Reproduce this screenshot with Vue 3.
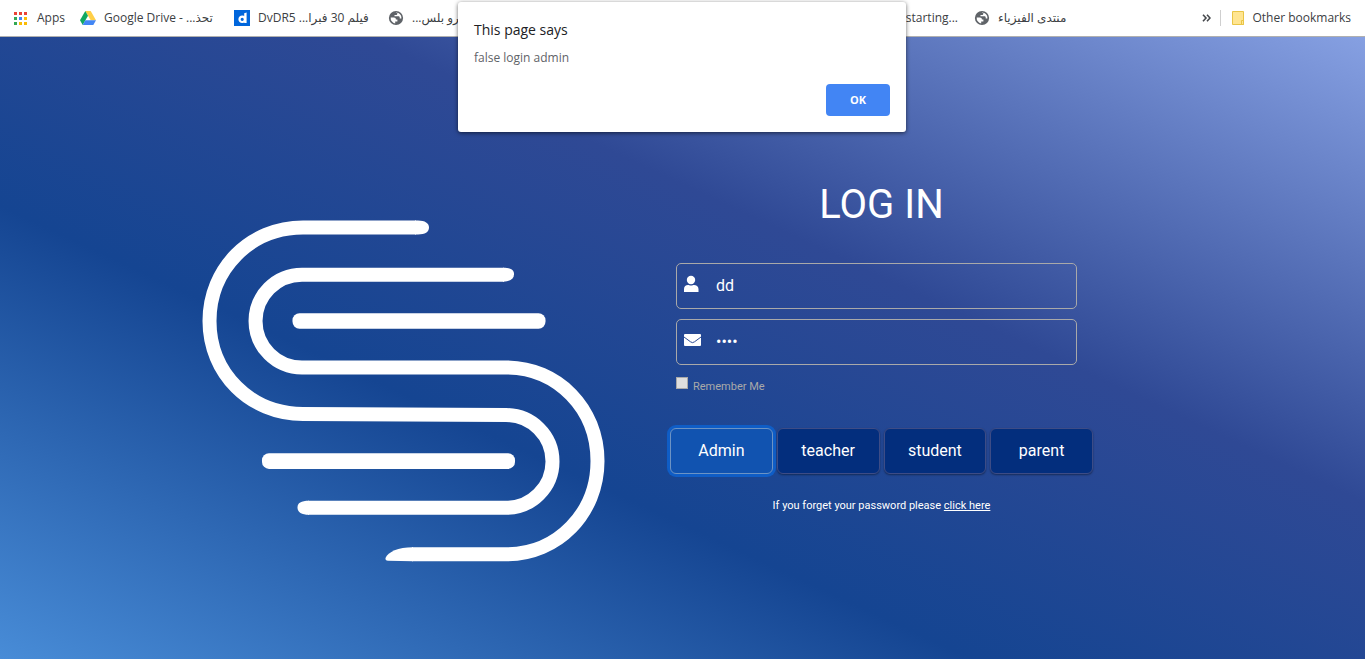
<script setup>
import { ref } from 'vue'

const username = ref('dd')
const password = ref('pass')
const remember = ref(false)
const dialogOpen = ref(true)
const roles = ['Admin', 'teacher', 'student', 'parent']
const activeRole = ref('Admin')
const appColors = [
  '#ea4335', '#ea4335', '#ea4335',
  '#34a853', '#4285f4', '#fbbc05',
  '#34a853', '#fbbc05', '#fbbc05',
]
</script>

<template>
  <div class="page">
    <nav class="bookmarks" aria-label="Bookmarks">
      <a class="bookmark apps" href="#">
        <svg class="apps-icon" viewBox="0 0 13 13" aria-hidden="true">
          <rect
            v-for="(c, i) in appColors"
            :key="i"
            :x="(i % 3) * 5"
            :y="Math.floor(i / 3) * 5"
            width="3"
            height="3"
            :fill="c"
          />
        </svg>
        <span>Apps</span>
      </a>
      <a class="bookmark chip" href="#">
        <svg class="icon" viewBox="0 0 16 16" aria-hidden="true">
          <path d="M5.3 1h5.4L16 10.2h-5.3z" fill="#ffcf48" />
          <path d="M5.3 1 0 10.3 2.7 15 8 5.7z" fill="#11a861" />
          <path d="M5.4 10.2H16L13.3 15H2.7z" fill="#4286f5" />
        </svg>
        <span>Google Drive - <bdi dir="rtl">تحذ...</bdi></span>
      </a>
      <a class="bookmark chip" href="#">
        <svg class="icon" viewBox="0 0 16 16" aria-hidden="true">
          <path d="M0 0h16v16H0z" fill="#0066dc" />
          <circle cx="8.2" cy="9.3" r="2.7" fill="none" stroke="#fff" stroke-width="2.2" />
          <path d="M10.2 3.2 12.6 2.6V13.1h-2.4z" fill="#fff" />
        </svg>
        <span>DvDR5 <bdi dir="rtl">فيلم 30 فبرا...</bdi></span>
      </a>
      <a class="bookmark chip" href="#">
        <svg class="icon" viewBox="0 0 16 16" aria-hidden="true">
          <circle cx="8" cy="8" r="7.1" fill="#5f6368" />
          <path d="M2.7 7.4h3.2c1.5 0 2 .8 2 2h1.5v2H7.2v2.1A5.6 5.6 0 0 1 2.7 7.4zM7.3 2.5h2v1.2c0 .8-.6 1.4-1.4 1.4H6.5v1.1h4c.8 0 1.2.6 1.2 1.3v1h1.7a5.6 5.6 0 0 0-3.1-5.5z" fill="#fff" />
        </svg>
        <span><bdi dir="rtl">نيرو بلس...</bdi></span>
      </a>
      <a class="bookmark chip covered" href="#"><span>starting...</span></a>
      <a class="bookmark" href="#">
        <svg class="icon" viewBox="0 0 16 16" aria-hidden="true">
          <circle cx="8" cy="8" r="7.1" fill="#5f6368" />
          <path d="M2.7 7.4h3.2c1.5 0 2 .8 2 2h1.5v2H7.2v2.1A5.6 5.6 0 0 1 2.7 7.4zM7.3 2.5h2v1.2c0 .8-.6 1.4-1.4 1.4H6.5v1.1h4c.8 0 1.2.6 1.2 1.3v1h1.7a5.6 5.6 0 0 0-3.1-5.5z" fill="#fff" />
        </svg>
        <span><bdi dir="rtl">منتدى الفيزياء</bdi></span>
      </a>
      <div class="overflow">
        <button class="more" type="button" aria-label="More bookmarks">
          <svg viewBox="0 0 9 8" aria-hidden="true">
            <path d="M1 .8 4 4 1 7.2M5 .8 8 4 5 7.2" fill="none" stroke="#45484c" stroke-width="1.6" />
          </svg>
        </button>
        <a class="bookmark other" href="#">
          <svg class="folder" viewBox="0 0 12 14" aria-hidden="true">
            <path d="M.5.5h11v13H.5z" fill="#ffe591" stroke="#e9c546" />
            <path d="M9.5 13.5V9.5h2v4z" fill="#ffe591" stroke="#e9c546" />
          </svg>
          <span>Other bookmarks</span>
        </a>
      </div>
    </nav>

    <main class="login">
      <svg class="logo" viewBox="200 218 408 346" role="img" aria-label="Logo">
        <g fill="none" stroke="#fff" stroke-width="14">
          <path d="M416 227.5H303C250 227.5 209.5 269 209.5 321S250 414 303 414L506 415A46.5 46.4 0 0 1 506 507.8H308" />
          <path d="M504 274.7H302A46.5 46.4 0 0 0 302 367.5H506C558 367.5 597.5 409 597.5 461S558 554.3 506 554.3H412" />
        </g>
        <g fill="#fff">
          <path d="M415 220.500H418C425 220.7 429 223 429 227.600S425 234.4 418 234.500H415z" />
          <path d="M503 267.700C511 268 514 269.500 514 274.200S510 281.700 503 281.700z" />
          <path d="M309 500.800C301 500.800 297.500 503 297.500 507.500S301 514.700 309 514.800z" />
          <path d="M413 547.300C398 547.300 388 552 385.500 558Q385 560.500 388 560.800L413 561.300z" />
          <rect x="292.5" y="313.2" width="253" height="15.6" rx="7" />
          <rect x="262" y="453.3" width="253" height="15.6" rx="7" />
        </g>
      </svg>

      <form class="panel" @submit.prevent>
        <h1>LOG IN</h1>
        <div class="fields">
          <label class="field">
            <svg viewBox="0 0 18 18" aria-hidden="true">
              <circle cx="7" cy="5" r="4.2" fill="#fff" />
              <path d="M0 17v-3C0 11.600 1.800 10 4 10c1 0 1.500.6 3 .6S9 10 10 10c2.200 0 4.500 1.600 4.500 4v3z" fill="#fff" />
            </svg>
            <input v-model="username" type="text" aria-label="User name" />
          </label>
          <label class="field">
            <svg viewBox="0 0 18 18" aria-hidden="true">
              <rect y="3" width="17" height="12" rx="1" fill="#fff" />
              <path d="M0 6 6.5 10.800Q8.500 12.500 10.500 10.800L17 6" fill="none" stroke="#2b4a95" />
            </svg>
            <input v-model="password" type="password" aria-label="Password" />
          </label>
          <label class="remember">
            <input v-model="remember" type="checkbox" />
            <span>Remember Me</span>
          </label>
        </div>
        <div class="roles">
          <button
            v-for="role in roles"
            :key="role"
            type="button"
            :class="{ active: role === activeRole }"
            @click="activeRole = role"
          >{{ role }}</button>
        </div>
        <p class="forgot">If you forget your password please <a href="#">click here</a></p>
      </form>
    </main>

    <section v-if="dialogOpen" class="dialog" role="alertdialog" aria-labelledby="dlg-title" aria-describedby="dlg-text">
      <h2 id="dlg-title">This page says</h2>
      <p id="dlg-text">false login admin</p>
      <button type="button" @click="dialogOpen = false">OK</button>
    </section>
  </div>
</template>

<style>
body {
  margin: 0;
}
</style>

<style scoped>
.page {
  display: flex;
  flex-direction: column;
  min-height: 100vh;
  position: relative;
  font-family: Roboto, "Liberation Sans", sans-serif;
}
.page * {
  box-sizing: border-box;
}
.bookmarks {
  display: flex;
  align-items: center;
  height: 37px;
  padding: 0 14px;
  background: #fff;
  border-bottom: 1px solid #b0b0b0;
  font-family: "Open Sans", "Noto Sans", "DejaVu Sans", sans-serif;
  font-size: 12px;
  line-height: 16px;
}
.bookmark {
  display: flex;
  align-items: center;
  gap: 8px;
  flex: none;
  color: #3c4043;
  text-decoration: none;
  white-space: nowrap;
}
.apps {
  gap: 10px;
  width: 66px;
}
.apps-icon {
  width: 13px;
  height: 13px;
}
.icon {
  width: 16px;
  height: 16px;
}
.chip {
  width: 154px;
}
.covered {
  justify-content: flex-end;
  margin-left: 278px;
  padding-right: 16px;
}
.overflow {
  display: flex;
  align-items: center;
  gap: 9px;
  margin-left: auto;
}
.more {
  display: flex;
  padding: 0;
  border: 0;
  background: none;
}
.more svg {
  width: 9px;
  height: 8px;
}
.other {
  gap: 8px;
  padding-left: 11px;
  border-left: 1px solid #cfcfcf;
}
.folder {
  width: 12px;
  height: 14px;
}
.login {
  flex: 1;
  display: grid;
  grid-template-columns: 608fr 757fr;
  align-items: start;
  background: linear-gradient(25deg, #488cd7 0%, #154592 36%, #2f4995 63%, #86a0e2 100%);
}
.logo {
  justify-self: end;
  width: 408px;
  margin-top: 181px;
}
.panel {
  width: 427px;
  margin: 142px 0 0 60px;
  color: #fff;
}
h1 {
  margin: 0;
  font-size: 40px;
  font-weight: 400;
  line-height: 52px;
  text-align: center;
}
.fields {
  display: grid;
  gap: 10px;
  width: 401px;
  margin: 32px 0 0 8px;
}
.field {
  display: flex;
  align-items: center;
  gap: 14px;
  height: 46px;
  padding: 0 7px;
  border: 1px solid #a9a9a9;
  border-radius: 5px;
}
.field svg {
  flex: none;
  width: 18px;
  height: 18px;
  margin-bottom: 4px;
}
.field input {
  flex: 1;
  min-width: 0;
  padding: 0;
  border: 0;
  outline: 0;
  background: none;
  color: #fff;
  font: 400 16px/20px Roboto, "Liberation Sans", sans-serif;
}
.remember {
  display: flex;
  align-items: flex-end;
  gap: 5px;
  height: 20px;
  color: #a9a9a9;
  font-size: 11px;
  line-height: 16px;
}
.remember input {
  appearance: none;
  width: 12px;
  height: 12px;
  margin: 0 0 6px;
  border: 1px solid #a9a9a9;
  background: #dedede;
}
.remember input:checked {
  background: #4285f4;
}
.roles {
  display: grid;
  grid-template-columns: repeat(4, 1fr);
  gap: 4px;
  margin-top: 33px;
  padding: 0 2px;
}
.roles button {
  height: 46px;
  padding: 0;
  border: 1px solid #3d4c86;
  border-radius: 6px;
  background: #032e7d;
  box-shadow: 0 1px 2px rgba(0, 0, 0, 0.4);
  color: #fff;
  font: 400 16px/20px Roboto, "Liberation Sans", sans-serif;
}
.roles .active {
  border-color: #6c93c4;
  background: #1153b0;
  box-shadow: 0 0 0 3px #0f5dc6;
}
.forgot {
  margin: 24px 0 0;
  font-size: 11px;
  line-height: 16px;
  text-align: center;
}
.forgot a {
  color: inherit;
  text-decoration: underline;
}
.dialog {
  position: absolute;
  top: 2px;
  left: 0;
  right: 1px;
  width: 448px;
  margin: 0 auto;
  padding: 16px;
  border-radius: 3px;
  background: #fff;
  box-shadow: 0 1px 4px rgba(0, 0, 0, 0.6);
  font-family: "Open Sans", "Noto Sans", sans-serif;
}
.dialog h2 {
  margin: 0;
  color: #202124;
  font-size: 14px;
  font-weight: 400;
  line-height: 24px;
}
.dialog p {
  margin: 6px 0 16px;
  color: #5f6368;
  font-size: 12px;
  line-height: 20px;
}
.dialog button {
  display: block;
  width: 64px;
  height: 32px;
  margin-left: auto;
  border: 0;
  border-radius: 4px;
  background: #4285f4;
  color: #fff;
  font: 700 11px/16px "Open Sans", "Noto Sans", sans-serif;
}
</style>
